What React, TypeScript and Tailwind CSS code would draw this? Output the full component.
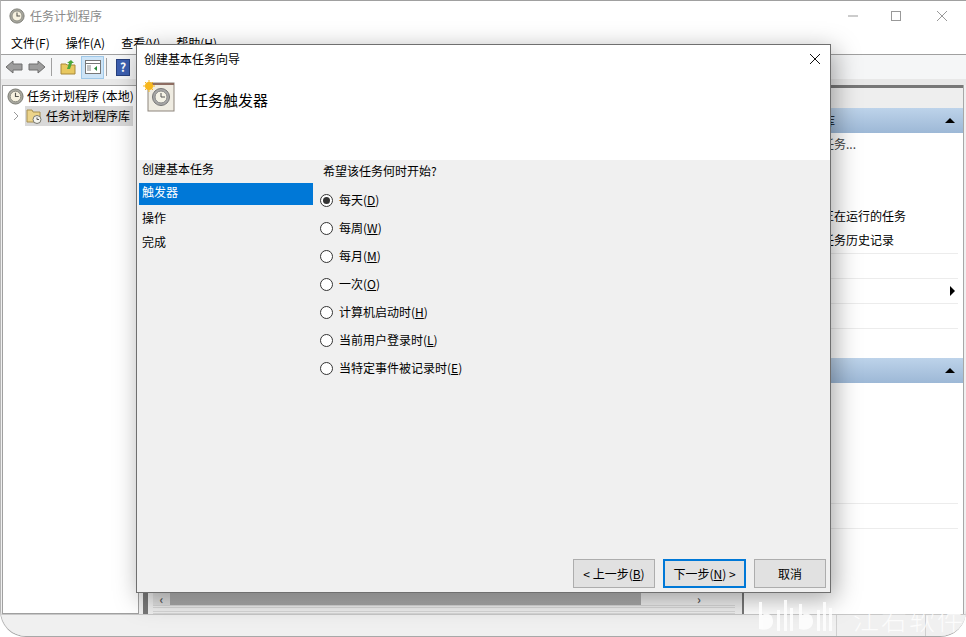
import React from "react";

const FONT = "font-['Noto_Sans_CJK_SC','Noto_Sans',sans-serif]";

function Clock({ size = 18 }: { size?: number }) {
  return (
    <svg width={size} height={size} viewBox="0 0 18 18" className="shrink-0">
      <circle cx="9" cy="9" r="8" fill="#a8a8a0" stroke="#77776f" />
      <circle cx="9" cy="9" r="5.6" fill="#f6f1df" stroke="#8a8a80" />
      <path d="M9 5v4h3.5" fill="none" stroke="#55554f" strokeWidth="1.2" />
    </svg>
  );
}

function Arrow({ dir }: { dir: "l" | "r" }) {
  return (
    <svg width="18" height="16" viewBox="0 0 18 16">
      <path
        d={dir === "l" ? "M1 8 8 2v3h9v6H8v3z" : "M17 8l-7-6v3H1v6h9v3z"}
        fill="#9d9d9d"
        stroke="#6e6e6e"
      />
    </svg>
  );
}

function Radio({ checked }: { checked?: boolean }) {
  return (
    <span className="w-[13px] h-[13px] rounded-full border border-[#333] bg-white flex items-center justify-center shrink-0">
      {checked && <span className="w-[7px] h-[7px] rounded-full bg-[#333]" />}
    </span>
  );
}

const options: [string, string][] = [
  ["每天", "D"],
  ["每周", "W"],
  ["每月", "M"],
  ["一次", "O"],
  ["计算机启动时", "H"],
  ["当前用户登录时", "L"],
  ["当特定事件被记录时", "E"],
];

function ActionHeader({ label }: { label: string }) {
  return (
    <div className="h-[25px] flex items-center justify-between pl-[7px] pr-[6px] bg-gradient-to-b from-[#bdd3ea] to-[#9db8d6] text-[12px] text-black">
      <span>{label}</span>
      <span className="w-0 h-0 border-l-[5px] border-r-[5px] border-b-[5px] border-l-transparent border-r-transparent border-b-black mr-[2px]" />
    </div>
  );
}

function Btn({ children, primary, width }: { children: React.ReactNode; primary?: boolean; width: string }) {
  return (
    <button
      className={
        "h-[29px] flex items-center justify-center bg-[#e1e1e1] text-[12px] text-black " +
        width +
        " " +
        (primary ? "border-2 border-[#0078d7]" : "border border-[#adadad]")
      }
    >
      {children}
    </button>
  );
}

export default function App() {
  return (
    <div className={`relative w-[966px] h-[637px] overflow-hidden bg-white ${FONT}`}>
      <div className="h-full flex flex-col bg-[#f0f0f0] border-t border-[#a0a0a0] border-b border-b-[#a8a8a8] border-l border-l-[#b5b5b5] rounded-b-[26px] overflow-hidden">
        {/* Title bar */}
        <div className="h-[30px] bg-white flex items-center pl-[8px] shrink-0">
          <Clock size={16} />
          <span className="ml-[5px] text-[12px] text-[#8a8a8a]">任务计划程序</span>
          <div className="ml-auto flex items-center text-[#8a8a8a]">
            <svg width="12" height="12" viewBox="0 0 12 12" className="mr-[31px]">
              <path d="M1 6h10" stroke="#999" />
            </svg>
            <svg width="12" height="12" viewBox="0 0 12 12" className="mr-[34px]">
              <rect x="1.500" y="1.500" width="9" height="9" fill="none" stroke="#999" />
            </svg>
            <svg width="12" height="12" viewBox="0 0 12 12" className="mr-[18px]">
              <path d="M1 1l10 10M11 1 1 11" stroke="#999" />
            </svg>
          </div>
        </div>
        {/* Menu */}
        <div className="h-[23px] bg-white flex items-center gap-[16px] pl-[10px] text-[12px] text-black shrink-0">
          <span>文件(F)</span>
          <span>操作(A)</span>
          <span>查看(V)</span>
          <span>帮助(H)</span>
        </div>
        {/* Toolbar */}
        <div className="h-[25px] bg-[#f5f6f7] border-t border-[#a0a0a0] flex items-center pl-[4px] gap-[5px] shrink-0">
          <Arrow dir="l" />
          <Arrow dir="r" />
          <span className="w-px h-[18px] bg-[#a0a0a0]" />
          <svg width="16" height="16" viewBox="0 0 16 16" className="ml-[3px]">
            <path d="M1 5h5l1 1h8v9H1z" fill="#e8c860" stroke="#a8893a" />
            <path d="M7 10l2-6-2 0 4-3 3 3h-2l-2 6z" fill="#4aa83a" />
          </svg>
          <span className="w-[23px] h-[23px] bg-[#cde4f7] border border-[#9fc8e8] flex items-center justify-center">
            <svg width="16" height="14" viewBox="0 0 16 14">
              <rect x=".5" y=".5" width="15" height="13" fill="#fff" stroke="#777" />
              <path d="M.5 3.500h15" stroke="#777" />
              <path d="M2 6h4M2 8h4M2 10h4" stroke="#888" />
              <path d="M12 6v5l-3-2.500z" fill="#2a8a3a" />
            </svg>
          </span>
          <span className="w-px h-[18px] bg-[#a0a0a0] -ml-[3px]" />
          <span className="w-[14px] h-[17px] ml-[4px] bg-[#3c5fb0] text-white text-[12px] font-bold flex items-center justify-center border border-[#27407e]">
            ?
          </span>
        </div>
        <div className="h-[6px] bg-[#e8e8e8] shrink-0" />
        {/* Panes */}
        <div className="flex-1 min-h-0 flex gap-[4px] pl-[1px] pr-[2px]">
          {/* Tree */}
          <div className="w-[137px] bg-white border border-[#a0a0a0] text-[12px] text-black shrink-0">
            <div className="h-[20px] flex items-center gap-[3px] pl-[4px] whitespace-nowrap">
              <Clock size={17} />
              <span>任务计划程序 (本地)</span>
            </div>
            <div className="h-[20px] flex items-center pl-[10px] whitespace-nowrap">
              <svg width="7" height="10" viewBox="0 0 7 10" className="mr-[5px]">
                <path d="M1 1l4 4-4 4" fill="none" stroke="#999" />
              </svg>
              <span className="flex items-center gap-[4px] bg-[#d9d9d9] h-[20px] pl-[1px] pr-[3px]">
                <svg width="16" height="16" viewBox="0 0 16 16">
                  <path d="M1 2h5l1 2h7v10H1z" fill="#ecd48a" stroke="#a89050" />
                  <circle cx="11" cy="11.500" r="4" fill="#f4f4ee" stroke="#77776f" />
                  <path d="M11 9.500v2h2" fill="none" stroke="#555" />
                </svg>
                任务计划程序库
              </span>
            </div>
          </div>
          {/* Middle */}
          <div className="flex-1 min-w-0 flex flex-col bg-[#f0f0f0] border-l-[5px] border-[#777] pl-[5px] pr-[3px]">
            <div className="flex-1" />
            <div className="h-[13px] flex items-center bg-[#f0f0f0] text-[#555] text-[12px] font-bold leading-none">
              <span className="w-[17px] h-[13px] bg-[#e2e2e2] flex items-center justify-center">‹</span>
              <span className="flex-1 h-[13px] bg-gradient-to-b from-[#b8b8b8] to-[#a8a8a8]" />
              <span className="w-[94px] h-[13px] flex items-center justify-end pr-[34px]">›</span>
            </div>
            <div className="h-[9px] border-t-[3px] border-b-[3px] border-double border-[#d8d8d8]" />
          </div>
          {/* Actions */}
          <div className="w-[222px] bg-white border-l-2 border-[#777] text-[12px] text-black flex flex-col shrink-0 border-r border-r-[#a8a8a8]">
            <div className="h-[3px] bg-[#777]" />
            <div className="h-[20px] bg-[#eeeeee]" />
            <ActionHeader label="任务计划程序库" />
            <div className="flex flex-col pl-[30px]">
              <div className="h-[22px] flex items-center text-[#444]">创建基本任务...</div>
              <div className="h-[25px]" />
              <div className="h-[24px]" />
              <div className="h-[24px] flex items-center">显示所有正在运行的任务</div>
              <div className="h-[24px] flex items-center">启用所有任务历史记录</div>
              <div className="h-px" />
            </div>
            <div className="mx-[3px] mr-[5px] flex flex-col">
              <div className="h-[25px] border-t border-[#ececec]" />
              <div className="h-[25px] border-t border-[#ececec] flex items-center justify-end pr-[3px]">
                <span className="w-0 h-0 border-t-[5px] border-b-[5px] border-l-[5px] border-t-transparent border-b-transparent border-l-black" />
              </div>
              <div className="h-[25px] border-t border-[#ececec]" />
              <div className="h-[30px] border-t border-[#ececec]" />
            </div>
            <ActionHeader label="任务" />
            <div className="h-[120px]" />
            <div className="mx-[3px] mr-[5px] flex flex-col">
              <div className="h-[25px] border-t border-[#ececec]" />
              <div className="h-[25px] border-t border-[#ececec]" />
            </div>
          </div>
        </div>
        {/* Status */}
        <div className="h-[22px] bg-[#f0f0f0] border-t border-[#c8c8c8] flex justify-end shrink-0">
          <span className="w-px h-[21px] bg-[#d0d0d0] mr-[88px]" />
          <span className="w-px h-[21px] bg-[#d0d0d0] mr-[40px]" />
        </div>
      </div>

      {/* Dialog */}
      <div className="absolute left-[136px] top-[44px] w-[695px] h-[549px] bg-white border border-[#6f6f6f] shadow-[4px_6px_24px_rgba(0,0,0,0.35)] flex flex-col">
        <div className="h-[29px] flex items-center justify-between pl-[7px] pr-[9px] shrink-0 -mt-[1px]">
          <span className="text-[12px] text-black">创建基本任务向导</span>
          <svg width="12" height="12" viewBox="0 0 12 12" className="mt-[1px]">
            <path d="M1 1l10 10M11 1 1 11" stroke="#111" />
          </svg>
        </div>
        <div className="h-[87px] flex items-start pl-[6px] shrink-0">
          <svg width="32" height="32" viewBox="0 0 32 32" className="mt-[7px]">
            <rect x="5" y="3" width="26" height="28" fill="#efece2" stroke="#8d857c" />
            <rect x="5" y="3" width="26" height="2" fill="#8e6d62" />
            <circle cx="18" cy="17" r="8.500" fill="#a8a8a8" stroke="#777" />
            <circle cx="18" cy="17" r="6" fill="#f4f2e6" stroke="#888" />
            <path d="M18 13v4h4" fill="none" stroke="#555" />
            <circle cx="6" cy="6" r="4" fill="#f7b71d" />
            <path d="M6 0v12M0 6h12M2 2l8 8M10 2l-8 8" stroke="#f7b71d" />
          </svg>
          <span className="ml-[18px] mt-[15px] text-[15px] leading-[24px] text-black">任务触发器</span>
        </div>
        <div className="flex-1 min-h-0 bg-[#f0f0f0] flex flex-col">
          <div className="flex-1 min-h-0 flex">
            <div className="w-[176px] pl-[2px] text-[12px] text-black shrink-0">
              <div className="h-[23px] flex items-center pl-[3px] pb-[6px] mb-[0px]">创建基本任务</div>
              <div className="h-[22px] flex items-center pl-[3px] pb-[4px] bg-[#0078d7] text-white">触发器</div>
              <div className="h-[24px] flex items-center pl-[3px] pt-[1px]">操作</div>
              <div className="h-[24px] flex items-center pl-[3px] pt-[1px]">完成</div>
            </div>
            <div className="flex-1 min-w-0 text-[12px] text-black pl-[10px]">
              <div className="h-[21px] flex items-center">希望该任务何时开始?</div>
              <div className="flex flex-col -ml-[3px] mt-[5px]">
                {options.map(([label, key], i) => (
                  <label key={key} className="h-[28px] flex items-center gap-[6px]">
                    <Radio checked={i === 0} />
                    <span>
                      {label}(<u>{key}</u>)
                    </span>
                  </label>
                ))}
              </div>
            </div>
          </div>
          <div className="h-[33px] flex items-start justify-end gap-[8px] pr-[4px] shrink-0">
            <Btn width="w-[82px]">
              <span className="whitespace-nowrap">
                &lt; 上一步(<u>B</u>)
              </span>
            </Btn>
            <Btn width="w-[83px]" primary>
              <span className="whitespace-nowrap">
                下一步(<u>N</u>) &gt;
              </span>
            </Btn>
            <Btn width="w-[72px]">取消</Btn>
          </div>
        </div>
      </div>

      {/* Watermark */}
      <div className="absolute left-[757px] top-[596px] flex items-end text-white pointer-events-none">
        <svg width="84" height="40" viewBox="0 0 84 40">
          <g fill="#ffffff" opacity=".85">
            <path d="M2 6h3v13c5-3 11-1 11 6 0 8-7 10-14 8z" />
            <rect x="20" y="14" width="3" height="21" />
            <rect x="27" y="4" width="3" height="31" />
            <rect x="33" y="12" width="3" height="23" />
            <path d="M42 8h3v11c5-3 11-1 11 6 0 8-7 10-14 8z" />
            <rect x="60" y="14" width="3" height="21" />
            <rect x="66" y="6" width="3" height="29" />
            <rect x="72" y="12" width="3" height="23" />
          </g>
        </svg>
        <span className="ml-[12px] mb-[1px] text-[26px] leading-[32px] tracking-[2px] text-white opacity-80 font-light whitespace-nowrap">
          江右软件
        </span>
      </div>
    </div>
  );
}
